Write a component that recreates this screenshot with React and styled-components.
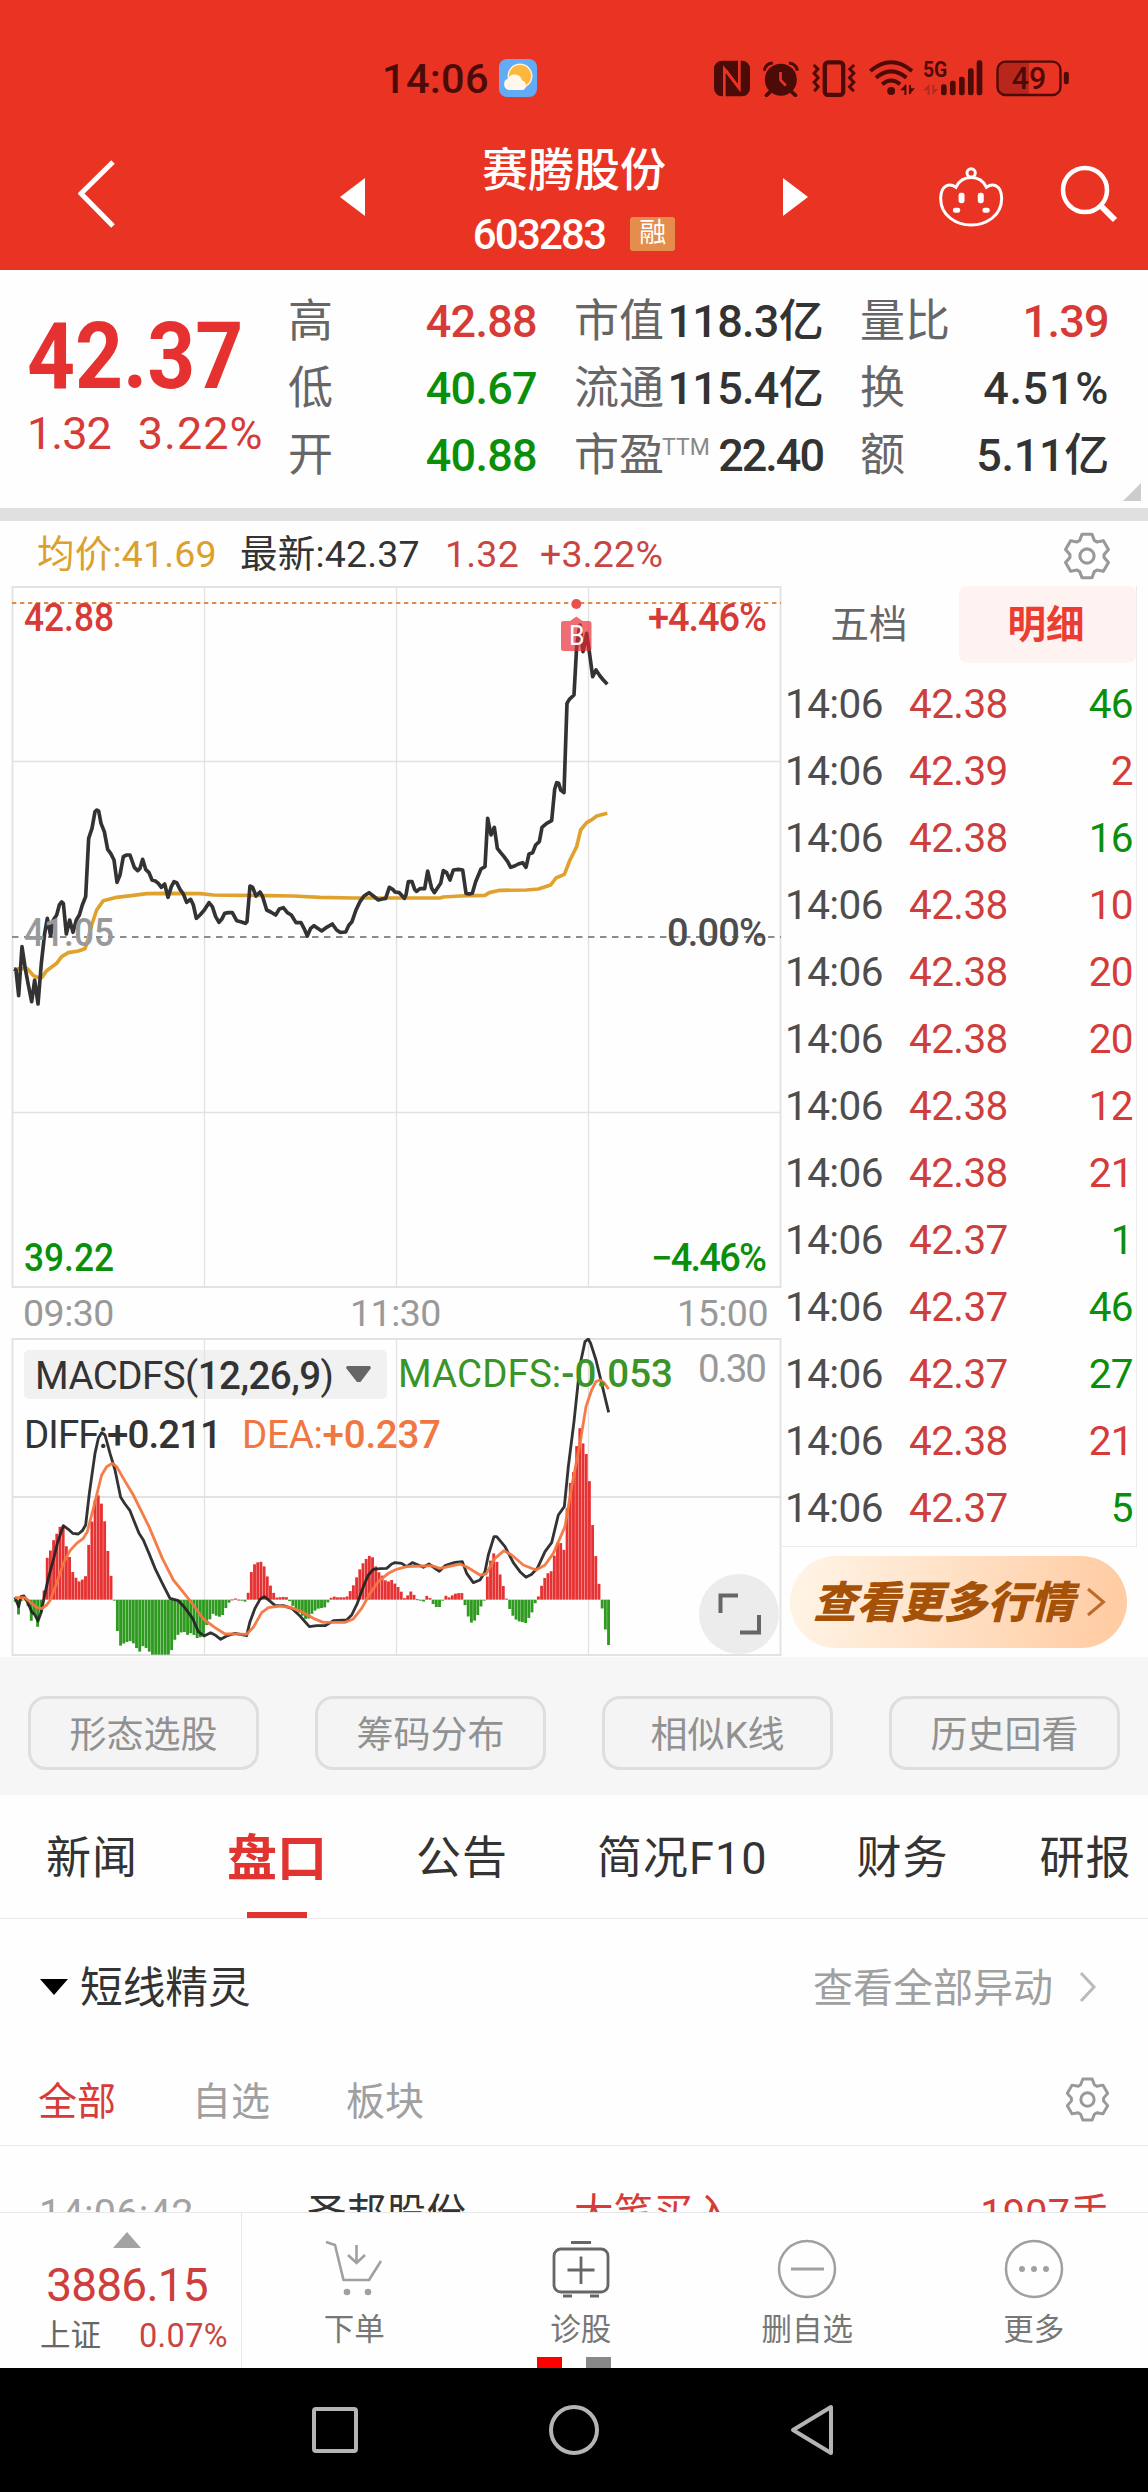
import React, { useState } from 'react';
import styled, { createGlobalStyle } from 'styled-components';

const RED = '#d63b38';
const GREEN = '#0a8f0a';
const DARK = '#333';

const stats = [
  [
    { label: '高', value: '42.88', color: RED },
    { label: '低', value: '40.67', color: GREEN },
    { label: '开', value: '40.88', color: GREEN }
  ],
  [
    { label: '市值', value: '118.3', unit: '亿', color: DARK },
    { label: '流通', value: '115.4', unit: '亿', color: DARK },
    { label: '市盈', sup: 'TTM', value: '22.40', color: DARK, spacing: -2 }
  ],
  [
    { label: '量比', value: '1.39', color: RED },
    { label: '换', value: '4.51%', color: DARK, spacing: 0.7 },
    { label: '额', value: '5.11', unit: '亿', color: DARK, spacing: -0.3 }
  ]
];

const trades = [
  ['42.38', 46, GREEN],
  ['42.39', 2, RED],
  ['42.38', 16, GREEN],
  ['42.38', 10, RED],
  ['42.38', 20, RED],
  ['42.38', 20, RED],
  ['42.38', 12, RED],
  ['42.38', 21, RED],
  ['42.37', 1, GREEN],
  ['42.37', 46, GREEN],
  ['42.37', 27, GREEN],
  ['42.38', 21, RED],
  ['42.37', 5, GREEN]
];

const tools = ['形态选股', '筹码分布', '相似K线', '历史回看'];
const tabs = ['新闻', '盘口', '公告', '简况F10', '财务', '研报'];
const filters = ['全部', '自选', '板块'];

// Chart series, in thirds of a pixel
const priceLine =
  '42,1167 48,1170 56,1247 66,1100 76,1167 85,1215 95,1265 104,1200 114,1272 124,1150 134,1060 142,1015 152,1068 160,1020 170,1005 178,975 185,966 190,970 199,1062 209,1020 219,1057 229,1020 238,1005 247,975 257,950 266,775 276,745 285,695 291,690 296,693 303,730 313,755 323,808 332,820 342,840 351,907 360,885 370,830 380,825 390,825 403,862 413,872 420,865 428,838 437,868 447,878 456,900 466,903 475,910 484,922 494,912 504,952 514,920 522,905 530,908 540,928 550,942 560,967 572,958 580,975 589,1015 600,1005 613,990 627,968 637,980 647,1010 657,1027 665,1018 674,1000 685,998 697,998 710,1022 722,1025 736,1030 741,1025 750,918 758,922 768,948 780,936 788,950 800,990 812,996 827,1005 838,987 850,983 862,998 874,1005 888,1028 903,1028 912,1045 922,1068 932,1045 942,1037 953,1045 965,1053 980,1042 997,1032 1010,1050 1020,1057 1037,1056 1047,1035 1056,1025 1068,990 1080,965 1092,948 1107,938 1120,948 1135,960 1147,957 1157,955 1168,922 1178,928 1185,936 1198,938 1213,955 1218,945 1225,905 1236,905 1244,928 1250,934 1260,926 1274,926 1283,873 1295,925 1303,938 1312,925 1322,910 1330,872 1340,878 1350,900 1360,870 1375,868 1388,870 1398,940 1408,942 1417,940 1427,905 1443,867 1455,860 1463,715 1473,765 1483,742 1492,805 1502,818 1512,830 1523,845 1532,862 1544,858 1555,852 1568,848 1578,862 1587,822 1598,818 1607,795 1618,785 1626,742 1640,730 1655,722 1664,628 1670,608 1676,610 1682,630 1692,638 1701,370 1708,358 1722,345 1730,200 1740,135 1749,215 1760,160 1768,215 1778,290 1788,270 1800,288 1810,300 1822,313';
const averageLine =
  '42,1167 80,1165 90,1175 100,1187 115,1193 125,1193 140,1172 170,1150 185,1130 205,1118 235,1113 255,1106 262,1085 275,1035 290,990 310,962 350,952 400,946 440,941 500,940 600,941 640,945 720,946 800,947 880,948 960,952 1060,954 1320,954 1330,951 1380,948 1455,946 1468,938 1500,931 1580,930 1615,927 1652,915 1668,894 1693,883 1710,840 1730,800 1742,750 1760,728 1777,718 1790,708 1822,700';
const diffLine =
  '45,1072 56,1100 63,1070 72,1068 82,1085 95,1115 105,1125 114,1143 124,1115 135,1060 145,1015 160,960 172,910 190,857 205,868 218,880 235,882 247,872 257,855 268,760 285,640 295,595 305,578 315,585 330,640 345,690 362,772 375,792 390,812 403,845 417,880 430,900 447,940 465,985 487,1030 510,1075 535,1082 552,1100 578,1135 595,1175 612,1188 632,1178 645,1185 662,1198 680,1188 705,1180 740,1187 750,1145 765,1105 780,1078 793,1070 808,1082 825,1096 850,1097 875,1105 900,1128 928,1160 950,1157 975,1157 1000,1142 1040,1140 1055,1125 1072,1090 1090,1040 1105,1005 1120,988 1140,986 1160,985 1175,972 1185,968 1205,970 1220,980 1237,968 1255,975 1270,982 1287,972 1305,985 1318,994 1335,977 1365,967 1387,965 1400,1000 1420,1028 1440,1020 1455,995 1465,945 1482,890 1490,890 1515,920 1540,968 1560,995 1578,1012 1595,1003 1612,985 1635,935 1655,908 1675,825 1693,800 1705,680 1722,545 1740,375 1755,305 1765,297 1772,310 1788,360 1805,430 1826,517';
const deaLine =
  '45,1073 75,1073 95,1090 112,1103 125,1106 140,1095 150,1082 170,1030 190,970 210,932 230,910 250,895 262,875 275,825 290,765 305,705 320,680 337,670 350,680 370,715 400,765 447,860 487,955 520,1020 555,1063 580,1095 610,1137 645,1163 675,1182 700,1182 740,1183 760,1162 785,1118 805,1103 840,1098 870,1102 905,1115 940,1135 970,1147 1035,1147 1060,1137 1085,1105 1110,1060 1135,1025 1165,1000 1190,988 1220,980 1270,978 1295,977 1320,985 1380,972 1402,982 1440,1005 1458,1002 1485,955 1512,932 1535,945 1570,975 1608,990 1635,975 1660,940 1695,860 1715,740 1740,610 1758,500 1775,450 1788,425 1800,420 1812,428 1826,447';
const histogram =
  '46,1085 56,1125 66,1078 76,1078 85,1100 95,1148 104,1120 114,1165 124,1110 133,1045 142,950 152,930 161,900 171,880 181,858 190,857 200,925 210,955 219,1000 229,1015 238,1025 248,1018 257,1008 267,905 277,835 286,775 296,765 305,793 315,850 324,938 334,1015 343,1082 352,1172 360,1218 375,1208 390,1203 400,1210 418,1237 428,1218 440,1225 455,1244 505,1244 515,1230 524,1200 535,1183 550,1173 562,1185 575,1178 595,1198 612,1180 620,1155 640,1120 655,1132 668,1125 678,1103 692,1080 705,1075 720,1080 735,1085 742,1080 750,1010 760,975 780,963 790,972 800,1003 808,1030 818,1050 826,1073 858,1070 868,1082 880,1100 900,1120 922,1142 935,1122 950,1107 975,1102 985,1085 997,1068 1010,1072 1040,1072 1045,1060 1055,1048 1065,1025 1075,998 1085,975 1095,962 1105,947 1117,950 1125,975 1135,995 1145,1005 1160,1027 1175,1020 1190,1037 1200,1047 1207,1062 1216,1080 1225,1062 1235,1052 1245,1070 1252,1078 1272,1085 1283,1062 1292,1078 1302,1097 1312,1103 1322,1100 1330,1075 1340,1065 1350,1075 1360,1062 1385,1058 1390,1070 1397,1105 1407,1137 1417,1152 1427,1137 1437,1118 1446,1090 1455,1075 1462,1010 1473,955 1483,937 1492,970 1502,1010 1511,1042 1520,1078 1530,1110 1540,1130 1552,1143 1570,1147 1580,1150 1590,1125 1600,1112 1608,1080 1616,1068 1626,1033 1636,1010 1646,997 1655,993 1665,935 1674,903 1683,910 1692,930 1702,795 1712,720 1721,695 1730,618 1740,562 1749,610 1759,643 1769,730 1778,858 1787,945 1797,1032 1806,1102 1816,1168 1826,1217'
    .split(' ')
    .map((p) => p.split(',').map(Number));

const ZERO = 1079;

// One bar per minute, interpolated between the stored points
const bars = Array.from({ length: 187 }, (_, i) => {
  const x = 46 + i * 9.568;
  const next = Math.max(1, histogram.findIndex((p) => p[0] >= x));
  const [x0, y0] = histogram[next - 1];
  const [x1, y1] = histogram[next];
  return { x, y: y0 + ((y1 - y0) * (x - x0)) / (x1 - x0) };
});

const gearPoints = [0, 60, 120, 180, 240, 300]
  .flatMap((a) => [
    [a - 25, 16.5],
    [a - 13, 21.5],
    [a + 13, 21.5],
    [a + 25, 16.5]
  ])
  .map(([a, r]) => {
    const t = ((a - 90) * Math.PI) / 180;
    return `${(r * Math.cos(t)).toFixed(1)},${(r * Math.sin(t)).toFixed(1)}`;
  })
  .join(' ');

const Gear = ({ size }) => (
  <svg width={size} height={size} viewBox="-24 -24 48 48" fill="none" stroke="#999" strokeWidth="3" strokeLinejoin="round">
    <polygon points={gearPoints} />
    <circle r="6.8" />
  </svg>
);

const StatusIcons = () => (
  <StatusIconRow>
    <svg width="36" height="37" viewBox="42 28 108 111">
      <rect x="42" y="30" width="108" height="107" rx="24" fill="#4d0b07" />
      <path d="M73 139V55L118 114V28" fill="none" stroke="#e93424" strokeWidth="8" />
      <path d="M77 58L118 112" stroke="#e93424" strokeWidth="8" />
    </svg>
    <svg width="36" height="37" viewBox="190 28 107 111" fill="none" stroke="#4d0b07">
      <circle cx="243" cy="87" r="48" fill="#4d0b07" stroke="none" />
      <path d="M193 60Q198 38 219 37M293 60Q288 38 267 37" strokeWidth="9" />
      <path d="M212 122L200 134M274 122L287 134" strokeWidth="11" strokeLinecap="round" />
      <path d="M242 64V88L258 105" stroke="#e93424" strokeWidth="8" />
    </svg>
    <svg width="44" height="37" viewBox="335 28 131 111" fill="none" stroke="#4d0b07" strokeWidth="9">
      <rect x="373" y="35" width="55" height="98" rx="10" strokeWidth="13" />
      <path d="M340 43L352 55L341 68L353 81L341 95L353 108L341 122M461 43L448 55L460 68L447 81L460 95L447 108L460 122" />
    </svg>
    <svg width="46" height="37" viewBox="503 28 139 111" fill="none" stroke="#4d0b07" strokeWidth="12">
      <path d="M507 61Q570 8 633 61M524 81Q570 43 616 81M543 101Q570 78 597 101" />
      <circle cx="570" cy="121" r="12" fill="#4d0b07" stroke="none" />
      <path d="M597 119H615V100ZM625 132V113H642Z" fill="#4d0b07" stroke="none" />
      <path d="M613 105V133M627 103V130" strokeWidth="6" />
    </svg>
    <SignalIcon width="60" height="37" viewBox="670 28 180 111" fill="#4d0b07">
      <text x="670" y="79" fontSize="68" fontWeight="700" textLength="73" lengthAdjust="spacingAndGlyphs">5G</text>
      <rect x="724" y="101" width="17" height="33" rx="7" />
      <rect x="751" y="90" width="17" height="44" rx="7" />
      <rect x="778" y="78" width="17" height="56" rx="7" />
      <rect x="805" y="53" width="17" height="81" rx="7" />
      <rect x="831" y="29" width="17" height="105" rx="7" />
      <path d="M671 119L690 100V133H684V119ZM698 102H704V115H716L698 133Z" fill="#b52a1e" />
    </SignalIcon>
    <svg width="73" height="37" viewBox="890 28 218 111">
      <path d="M915 34H988V132H915Q894 132 894 110V56Q894 34 915 34Z" fill="#b9271c" />
      <rect x="894" y="33" width="189" height="100" rx="24" fill="none" stroke="#4d0b07" strokeWidth="7" />
      <rect x="1093" y="63" width="15" height="38" rx="7" fill="#4d0b07" />
      <text x="937" y="115" fontSize="94" fontWeight="500" fill="#4d0b07" textLength="103" lengthAdjust="spacingAndGlyphs">49</text>
    </svg>
  </StatusIconRow>
);

const WeatherIcon = () => (
  <svg width="38" height="38" viewBox="0 0 38 38">
    <rect width="38" height="38" rx="8" fill="#62abf6" />
    <circle cx="21" cy="17" r="12.500" fill="#fff2cf" />
    <circle cx="21" cy="17" r="11" fill="#fdb73f" />
    <path d="M10 31a6 6 0 0 1-1-11.500a7.500 7.500 0 0 1 14 2a5 5 0 0 1 1 9.500z" fill="#fff7ec" />
  </svg>
);

const RobotIcon = () => (
  <svg width="68" height="63" viewBox="710 345 205 190" fill="none" stroke="#fff" strokeWidth="9">
    <circle cx="813" cy="369" r="12.500" />
    <path d="M767 412C750 400 722 402 721 445C721 500 770 526 813 526C856 526 905 500 905 445C904 402 876 400 859 412C850 394 835 383 813 383C791 383 776 394 767 412Z" />
    <g fill="#fff" stroke="none">
      <rect x="775" y="429" width="18" height="31" rx="7" />
      <rect x="833" y="429" width="18" height="31" rx="7" />
      <rect x="758" y="474" width="22" height="15" rx="7" />
      <rect x="847" y="474" width="22" height="15" rx="7" />
    </g>
  </svg>
);

const PriceChart = () => (
  <svg width="782" height="702" viewBox="0 586 782 702" display="block">
    <g stroke="#e2e2e2" strokeWidth="1.300">
      <path d="M204.500 586V1287M396.500 586V1287M588.500 586V1287M12 761.500H780M12 1112.500H780" />
      <path d="M12.500 587H780.500V1287H12.500Z" fill="none" strokeWidth="1.800" />
    </g>
    <path d="M12 603H781" stroke="#df8a46" strokeWidth="2" strokeDasharray="4.300 3.700" />
    <path d="M12 937H781" stroke="#8c8c8c" strokeWidth="2" strokeDasharray="6.500 5.500" />
    <g transform="translate(0 580) scale(.33333)" fill="none" strokeWidth="11" strokeLinejoin="round">
      <polyline points={averageLine} stroke="#e0a22e" />
      <polyline points={priceLine} stroke="#333" />
    </g>
    <circle cx="576.300" cy="604" r="5" fill="#e8504e" />
    <path d="M563.500 621H570L576.300 616.500L582.600 621H589A2.500 2.500 0 0 1 591.500 623.500V648.500A2.500 2.500 0 0 1 589 651H563.500A2.500 2.500 0 0 1 561 648.500V623.500A2.500 2.500 0 0 1 563.500 621Z" fill="#e72a30" fillOpacity=".68" />
    <text x="569" y="645" fontSize="27" fill="#fff" textLength="15.500" lengthAdjust="spacingAndGlyphs">B</text>
    <ChartLabels>
      <text x="24" y="631" fill={RED} textLength="90" lengthAdjust="spacingAndGlyphs">42.88</text>
      <text x="648" y="631" fill={RED} textLength="119">+4.46%</text>
      <text x="24" y="946" fill="#999" textLength="90" lengthAdjust="spacingAndGlyphs">41.05</text>
      <text x="667" y="946" fill="#4d4d4d" textLength="100">0.00%</text>
      <text x="24" y="1271" fill={GREEN} textLength="90" lengthAdjust="spacingAndGlyphs">39.22</text>
      <text x="651" y="1271" fill={GREEN} textLength="116">−4.46%</text>
    </ChartLabels>
  </svg>
);

const MacdChart = () => (
  <svg width="782" height="319" viewBox="0 1338 782 319" display="block">
    <rect x="24" y="1350" width="363" height="49" rx="5" fill="#f1f1f1" />
    <g stroke="#e2e2e2" strokeWidth="1.300">
      <path d="M204.500 1339V1655M396.500 1339V1655M588.500 1339V1655" />
      <path d="M12.500 1339H780.500V1655H12.500ZM12 1497H780" fill="none" strokeWidth="1.800" />
    </g>
    <g transform="translate(0 1240) scale(.33333)" fill="none" strokeLinejoin="round">
      {bars.map(({ x, y }) => (
        <rect
          key={x}
          x={x - 4.3}
          y={Math.min(y, ZERO)}
          width="8.600"
          height={Math.max(3, Math.abs(y - ZERO))}
          fill={y < ZERO ? '#e63232' : '#2f9a20'}
        />
      ))}
      <polyline points={diffLine} stroke="#222" strokeOpacity=".92" strokeWidth="8.500" />
      <polyline points={deaLine} stroke="#f4763f" strokeOpacity=".95" strokeWidth="8.500" />
    </g>
    <path d="M347 1366H370L371 1368L360.500 1382H357L346 1368Z" fill="#666" />
    <MacdLabels>
      <text x="35" y="1389" fill="#333" textLength="299">
        MACDFS(<tspan fontWeight="500">12,26,9</tspan>)
      </text>
      <text x="398" y="1387" fill="#3a9427" textLength="275">
        MACDFS:<tspan fontWeight="500">-0.053</tspan>
      </text>
      <text x="24" y="1448" fill="#333" textLength="198">
        DIFF:<tspan fontWeight="500">+0.211</tspan>
      </text>
      <text x="242" y="1448" fill="#f07642" textLength="199">
        DEA:<tspan fontWeight="500">+0.237</tspan>
      </text>
      <text x="698" y="1382" fill="#999" textLength="69">0.30</text>
    </MacdLabels>
    <circle cx="739" cy="1614" r="40" fill="#ececec" />
    <path d="M720.500 1613V1595.500H738M759 1615V1632.500H740" fill="none" stroke="#666" strokeWidth="4" />
  </svg>
);

const TradePanel = () => {
  const [mode, setMode] = useState('明细');

  return (
    <TradeColumn>
      <TradeBox>
        <TradeTabs>
          {['五档', '明细'].map((name) => (
            <TradeTab key={name} $active={mode === name} onClick={() => setMode(name)}>
              {name}
            </TradeTab>
          ))}
        </TradeTabs>
        {trades.map(([price, volume, color], i) => (
          <TradeRow key={i}>
            <TradeTime>14:06</TradeTime>
            <TradePrice>{price}</TradePrice>
            <TradeVolume $color={color}>{volume}</TradeVolume>
          </TradeRow>
        ))}
      </TradeBox>
      <MoreButton>
        <span>查看更多行情</span>
        <svg width="20" height="30" viewBox="0 0 20 30" fill="none" stroke="#bd6a2a" strokeWidth="3">
          <path d="M2 2L17.500 15L2 28" />
        </svg>
      </MoreButton>
    </TradeColumn>
  );
};

const App = () => {
  const [activeTab, setActiveTab] = useState('盘口');
  const [activeFilter, setActiveFilter] = useState('全部');

  return (
    <Page>
      <GlobalStyle />
      <Header>
        <StatusBar>
          <Clock>14:06</Clock>
          <WeatherIcon />
          <StatusIcons />
        </StatusBar>
        <TitleBar>
          <svg width="38" height="68" viewBox="0 0 38 68" fill="none" stroke="#fff" strokeWidth="5">
            <path d="M35 2L3 33.500L35 66" />
          </svg>
          <Arrow width="25" height="38" viewBox="0 0 25 38">
            <path d="M25 0V38L0 19Z" />
          </Arrow>
          <StockTitle>
            <StockName>赛腾股份</StockName>
            <StockCode>
              <span>603283</span>
              <Badge>融</Badge>
            </StockCode>
          </StockTitle>
          <Arrow width="25" height="38" viewBox="0 0 25 38">
            <path d="M0 0V38L25 19Z" />
          </Arrow>
          <HeaderActions>
            <RobotIcon />
            <svg width="58" height="58" viewBox="0 0 58 58" fill="none" stroke="#fff" strokeWidth="4.500">
              <circle cx="25" cy="25" r="22" />
              <path d="M41 41L55 55" strokeWidth="6" />
            </svg>
          </HeaderActions>
        </TitleBar>
      </Header>

      <Quote>
        <QuoteMain>
          <LastPrice>42.37</LastPrice>
          <Change>
            <ChangeValue $spacing={-1}>1.32</ChangeValue>
            <ChangeValue $spacing={1}>3.22%</ChangeValue>
          </Change>
        </QuoteMain>
        {stats.map((column, i) => (
          <StatColumn key={i}>
            {column.map((item) => (
              <StatRow key={item.label}>
                <StatLabel>
                  {item.label}
                  {item.sup && <Sup>{item.sup}</Sup>}
                </StatLabel>
                <StatValue $color={item.color} $spacing={item.spacing ?? -0.7}>
                  {item.value}
                  {item.unit}
                </StatValue>
              </StatRow>
            ))}
          </StatColumn>
        ))}
        <Corner />
      </Quote>

      <InfoBar>
        <Info $color="#dba02d" $width={203}>均价:41.69</Info>
        <Info $color="#333" $width={205}>最新:42.37</Info>
        <Info $color="#c94442" $width={95}>1.32</Info>
        <Info $color="#c94442" $width={522}>+3.22%</Info>
        <Gear size={50} />
      </InfoBar>

      <Market>
        <ChartColumn>
          <PriceChart />
          <TimeAxis>
            <span>09:30</span>
            <span>11:30</span>
            <span>15:00</span>
          </TimeAxis>
          <MacdChart />
        </ChartColumn>
        <TradePanel />
      </Market>

      <Tools>
        {tools.map((name) => (
          <ToolButton key={name}>{name}</ToolButton>
        ))}
      </Tools>

      <Tabs>
        {tabs.map((name) => (
          <Tab key={name} $active={activeTab === name} onClick={() => setActiveTab(name)}>
            {name}
          </Tab>
        ))}
      </Tabs>

      <SectionHead>
        <svg width="28" height="16" viewBox="0 0 28 16">
          <path d="M0 0H28L14 16Z" fill="#000" />
        </svg>
        <SectionTitle>短线精灵</SectionTitle>
        <SectionLink>查看全部异动</SectionLink>
        <svg width="18" height="32" viewBox="0 0 18 32" fill="none" stroke="#bbb" strokeWidth="3">
          <path d="M2 2L15 16L2 30" />
        </svg>
      </SectionHead>

      <Filters>
        {filters.map((name) => (
          <Filter key={name} $active={activeFilter === name} onClick={() => setActiveFilter(name)}>
            {name}
          </Filter>
        ))}
        <Gear size={47} />
      </Filters>

      <AlertRow>
        <AlertCell $width={268} $color="#a3a3a3">14:06:42</AlertCell>
        <AlertCell $width={267} $color="#333">圣邦股份</AlertCell>
        <AlertCell $width={300} $color={RED}>大笔买入</AlertCell>
        <AlertCell $right $color={RED}>1907手</AlertCell>
      </AlertRow>

      <BottomBar>
        <IndexCell>
          <svg width="28" height="16" viewBox="0 0 28 16">
            <path d="M14 0L28 16H0Z" fill="#a3a3a3" />
          </svg>
          <IndexValue>3886.15</IndexValue>
          <IndexInfo>
            <span>上证</span>
            <IndexPercent>0.07%</IndexPercent>
          </IndexInfo>
        </IndexCell>
        <Action>
          <svg width="60" height="60" viewBox="0 0 60 60" fill="none" stroke="#a0a0a0" strokeWidth="2.600">
            <path d="M2 3L11 6L19.500 41H45L57 22" strokeLinejoin="round" />
            <path d="M32.500 6V24M24 16L32.500 24L41 16" />
            <circle cx="23" cy="53" r="3.300" fill="#a0a0a0" stroke="none" />
            <circle cx="44" cy="53" r="3.300" fill="#a0a0a0" stroke="none" />
          </svg>
          下单
        </Action>
        <Action>
          <svg width="60" height="60" viewBox="0 0 60 60" fill="none" stroke="#666" strokeWidth="2.800">
            <rect x="3" y="10" width="54" height="43" rx="7" />
            <path d="M30 17.500V45M16.500 31H43.500M20 3.500H40M12 57H21M39 57H48" />
          </svg>
          诊股
        </Action>
        <Action>
          <svg width="60" height="60" viewBox="0 0 60 60" fill="none" stroke="#a0a0a0" strokeWidth="2.500">
            <circle cx="30" cy="30" r="28" />
            <path d="M14 30H47" strokeWidth="3" />
          </svg>
          删自选
        </Action>
        <Action>
          <svg width="60" height="60" viewBox="0 0 60 60" fill="#a0a0a0">
            <circle cx="30" cy="30" r="28" fill="none" stroke="#a0a0a0" strokeWidth="2.500" />
            <circle cx="18" cy="30" r="3" />
            <circle cx="30" cy="30" r="3" />
            <circle cx="42" cy="30" r="3" />
          </svg>
          更多
        </Action>
        <Pager>
          <PagerDot $color="#ff0000" />
          <PagerDot $color="#888" />
        </Pager>
      </BottomBar>

      <SystemNav>
        <svg width="50" height="54" viewBox="0 0 50 54" fill="none" stroke="#b4b4b4" strokeWidth="4">
          <rect x="4" y="6" width="42" height="42" rx="2" />
        </svg>
        <svg width="54" height="54" viewBox="0 0 54 54" fill="none" stroke="#b4b4b4" strokeWidth="4">
          <circle cx="27" cy="27" r="23" />
        </svg>
        <svg width="50" height="54" viewBox="0 0 50 54" fill="none" stroke="#b4b4b4" strokeWidth="4" strokeLinejoin="round">
          <path d="M43 4V50L5 27Z" />
        </svg>
      </SystemNav>
    </Page>
  );
};

// Styles
const GlobalStyle = createGlobalStyle`
  * {
    box-sizing: border-box;
  }

  body {
    margin: 0;
    background: #fefefe;
    font-family: Roboto, "Noto Sans CJK SC", sans-serif;
  }

  button {
    border: none;
    background: none;
    padding: 0;
    font-family: inherit;
  }

  svg {
    flex-shrink: 0;
  }
`;

const Page = styled.div`
  width: 1148px;
  height: 2492px;
  overflow: hidden;
  display: flex;
  flex-direction: column;
  background: #fefefe;
  white-space: nowrap;
`;

const Header = styled.header`
  height: 270px;
  background: #e93424;
  color: #fff;
`;

const StatusBar = styled.div`
  display: flex;
  align-items: center;
  height: 156px;
  padding-left: 382px;
`;

const Clock = styled.span`
  width: 117px;
  font-size: 41.500px;
  font-weight: 500;
  letter-spacing: 0.3px;
  color: #4d0b07;
`;

const StatusIconRow = styled.div`
  display: flex;
  gap: 13px;
  margin-left: 177px;
`;

const SignalIcon = styled.svg`
  margin-left: -5px;
  overflow: visible;
`;

const TitleBar = styled.div`
  display: flex;
  height: 114px;
  padding-left: 78px;

  > svg {
    margin-top: 4px;
  }
`;

const Arrow = styled.svg`
  margin: 22px 0 0 224px;
  fill: #fff;

  && {
    margin-top: 22px;
  }

  & + div + & {
    margin-left: 0;
  }
`;

const StockTitle = styled.div`
  width: 418px;
  margin-top: -14px;
  text-align: center;
`;

const StockName = styled.div`
  height: 57px;
  font-size: 46px;
  font-weight: 500;
  line-height: 56px;
`;

const StockCode = styled.div`
  display: flex;
  align-items: center;
  justify-content: center;
  gap: 25px;
  height: 70px;
  font-size: 42px;
  font-weight: 500;
  letter-spacing: -1.8px;
`;

const Badge = styled.span`
  width: 45px;
  height: 34px;
  border-radius: 3px;
  background: #e58d4c;
  font-size: 27px;
  font-weight: 400;
  letter-spacing: 0;
  line-height: 33px;
`;

const HeaderActions = styled.div`
  display: flex;
  align-items: flex-start;
  gap: 55px;
  margin: 9px 0 0 129px;
`;

const Quote = styled.section`
  position: relative;
  display: flex;
  height: 251px;
  padding-top: 18px;
  border-bottom: 13px solid #e0e0e0;
`;

const QuoteMain = styled.div`
  width: 288px;
  padding-left: 27px;
`;

const LastPrice = styled.div`
  height: 110px;
  margin-top: 14px;
  font-size: 93px;
  font-weight: 700;
  line-height: 110px;
  color: #e53230;
  transform: scaleX(0.9);
  transform-origin: left;
`;

const Change = styled.div`
  display: flex;
  gap: 27px;
  margin-top: -8px;
  font-size: 45px;
  line-height: 60px;
  color: ${RED};
`;

const ChangeValue = styled.span`
  letter-spacing: ${(props) => props.$spacing}px;
`;

const StatColumn = styled.div`
  width: 249px;
  margin-right: 37px;
`;

const StatRow = styled.div`
  display: flex;
  justify-content: space-between;
  height: 67px;
  line-height: 67px;
`;

const StatLabel = styled.span`
  display: flex;
  font-size: 45px;
  color: #666;
`;

const Sup = styled.span`
  margin: -8px 0 0 -2px;
  font-size: 23px;
  color: #888;
`;

const StatValue = styled.span`
  font-size: 45px;
  font-weight: 500;
  letter-spacing: ${(props) => props.$spacing}px;
  color: ${(props) => props.$color};
`;

const Corner = styled.i`
  position: absolute;
  right: 7px;
  bottom: 7px;
  border-bottom: 18px solid #ccc;
  border-left: 18px solid transparent;
`;

const InfoBar = styled.div`
  display: flex;
  align-items: center;
  height: 65px;
  padding-left: 37px;

  > svg {
    margin-top: 4px;
  }
`;

const Info = styled.span`
  width: ${(props) => props.$width}px;
  font-size: 37.500px;
  line-height: 64px;
  letter-spacing: 0.2px;
  color: ${(props) => props.$color};
`;

const Market = styled.section`
  display: flex;
  height: 1071px;
`;

const ChartColumn = styled.div`
  width: 782px;
`;

const ChartLabels = styled.g`
  font-size: 38px;
  font-weight: 500;
`;

const MacdLabels = styled.g`
  font-size: 38.500px;
`;

const TimeAxis = styled.div`
  display: flex;
  justify-content: space-between;
  height: 50px;
  padding: 0 14px 0 23px;
  font-size: 37.500px;
  line-height: 50px;
  letter-spacing: -0.5px;
  color: #999;
`;

const TradeColumn = styled.div`
  width: 355px;
`;

const TradeBox = styled.div`
  height: 961px;
  border: solid #ebebeb;
  border-width: 0 1.5px 1.5px 0;
`;

const TradeTabs = styled.div`
  display: flex;
  height: 85px;
`;

const TradeTab = styled.button`
  width: 177px;
  height: 77px;
  padding-right: 3px;
  border-radius: 8px;
  font-size: 38.500px;
  line-height: 74px;
  font-weight: ${(props) => (props.$active ? 700 : 400)};
  color: ${(props) => (props.$active ? '#ec3d33' : '#666')};
  background: ${(props) => (props.$active ? '#fff3f2' : 'none')};
`;

const TradeRow = styled.div`
  display: flex;
  height: 67px;
  padding: 0 3px 0 3px;
  font-size: 40.500px;
  line-height: 67px;
  letter-spacing: -0.6px;
`;

const TradeTime = styled.span`
  width: 124px;
  color: #4d4d4d;
`;

const TradePrice = styled.span`
  flex: 1;
  color: #cd3f3d;
`;

const TradeVolume = styled.span`
  color: ${(props) => props.$color};
`;

const MoreButton = styled.button`
  display: flex;
  align-items: center;
  justify-content: center;
  gap: 12px;
  width: 337px;
  height: 92px;
  margin: 9px 0 0 8px;
  border-radius: 46px;
  background: linear-gradient(100deg, #fff3e4 5%, #ffcca3 95%);
  font-size: 43.500px;
  font-weight: 900;
  font-style: italic;
  color: #a55108;

  span {
    margin: -6px 0 0 2px;
  }
`;

const Tools = styled.div`
  display: flex;
  gap: 56px;
  height: 138px;
  padding: 39px 28px 0;
  background: #f6f6f6;
`;

const ToolButton = styled.button`
  width: 231px;
  height: 74px;
  padding-bottom: 3px;
  border: 3px solid #dedede;
  border-radius: 18px;
  background: #f4f4f4;
  font-size: 37px;
  color: #919191;
`;

const Tabs = styled.nav`
  display: flex;
  gap: 89px;
  height: 124px;
  padding-left: 46px;
  border-bottom: 1px solid #e8e8e8;
`;

const Tab = styled.button`
  position: relative;
  padding-bottom: 5px;
  font-size: ${(props) => (props.$active ? 50 : 45)}px;
  font-weight: ${(props) => (props.$active ? 700 : 400)};
  letter-spacing: ${(props) => (props.$active ? 0 : 1)}px;
  color: ${(props) => (props.$active ? '#e13430' : '#333')};

  &::after {
    content: '';
    display: ${(props) => (props.$active ? 'block' : 'none')};
    position: absolute;
    left: calc(50% - 30px);
    bottom: 0;
    width: 60px;
    height: 6px;
    background: #e13430;
  }

  &:last-child {
    margin-left: 2px;
  }
`;

const SectionHead = styled.div`
  display: flex;
  align-items: center;
  height: 135px;
  padding: 0 51px 0 40px;
`;

const SectionTitle = styled.h2`
  flex: 1;
  margin: -5px 0 0 12px;
  font-size: 42.700px;
  font-weight: 400;
  color: #333;
`;

const SectionLink = styled.span`
  margin: -3px 26px 0 0;
  font-size: 40px;
  color: #a0a0a0;
`;

const Filters = styled.div`
  display: flex;
  align-items: center;
  height: 92px;
  padding-left: 38px;
  border-bottom: 1px solid #e8e8e8;

  > svg {
    margin-left: 564px;
  }
`;

const Filter = styled.button`
  width: 154px;
  padding-bottom: 4px;
  text-align: left;
  font-size: 39px;
  color: ${(props) => (props.$active ? RED : '#a0a0a0')};
`;

const AlertRow = styled.div`
  display: flex;
  height: 66px;
  padding: 36px 38px 0 39px;
  overflow: hidden;
  font-size: 39.500px;
  line-height: 64px;
`;

const AlertCell = styled.span`
  width: ${(props) => props.$width}px;
  margin-left: ${(props) => (props.$right ? 'auto' : 0)};
  letter-spacing: 0.3px;
  color: ${(props) => props.$color};
`;

const BottomBar = styled.footer`
  position: relative;
  display: flex;
  height: 156px;
  border-top: 1px solid #e8e8e8;
  background: #fefefe;
`;

const IndexCell = styled.div`
  display: flex;
  flex-direction: column;
  align-items: center;
  width: 242px;
  padding: 19px 0 0 13px;
  border-right: 1px solid #e8e8e8;
`;

const IndexValue = styled.span`
  margin-top: 9px;
  font-size: 46px;
  line-height: 57px;
  letter-spacing: -0.8px;
  color: #cd3f3d;
`;

const IndexInfo = styled.div`
  display: flex;
  gap: 38px;
  margin-left: 14px;
  font-size: 30.500px;
  line-height: 44px;
  color: #666;
`;

const IndexPercent = styled.span`
  font-size: 32.500px;
  letter-spacing: 0.4px;
  color: #c94442;
`;

const Action = styled.button`
  display: flex;
  flex: 1;
  flex-direction: column;
  align-items: center;
  padding: 26px 2px 0 0;
  font-size: 30.500px;
  line-height: 61px;
  color: #777;
`;

const Pager = styled.div`
  position: absolute;
  left: 537px;
  bottom: 0;
  display: flex;
  gap: 24px;
`;

const PagerDot = styled.i`
  width: 25px;
  height: 11px;
  background: ${(props) => props.$color};
`;

const SystemNav = styled.div`
  display: flex;
  justify-content: center;
  gap: 187px;
  height: 124px;
  padding-top: 35px;
  background: #000;
`;

export default App;
